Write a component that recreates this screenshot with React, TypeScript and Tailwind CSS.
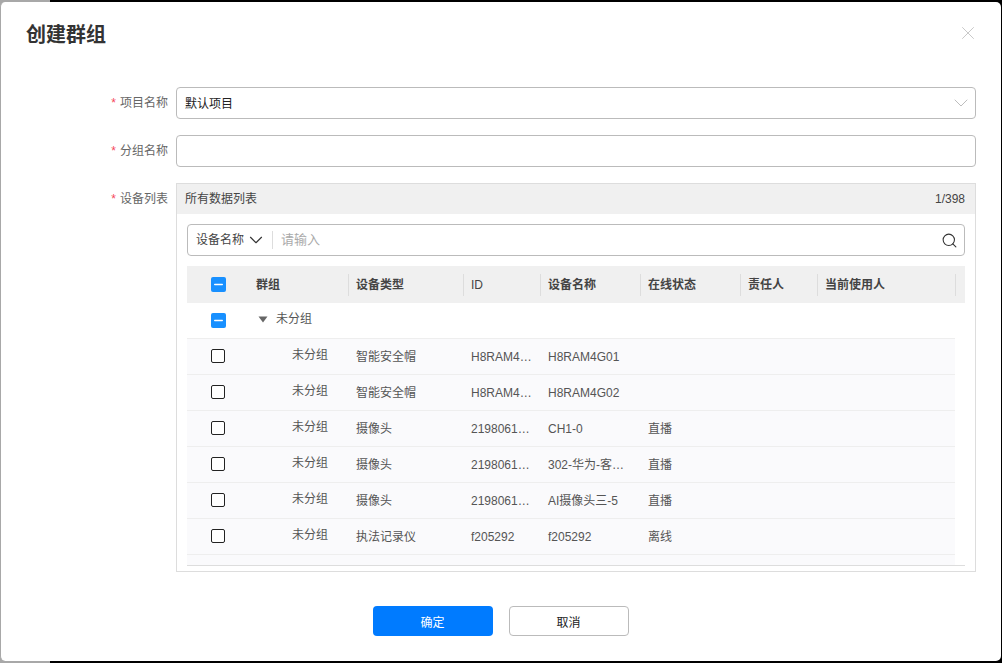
import React from 'react';
import { X, ChevronDown, Search, Minus } from 'lucide-react';

const FONT = 'font-["Liberation_Sans","Noto_Sans_CJK_SC",sans-serif]';
const GRID = 'grid grid-cols-[61px_100px_115px_77px_100px_100px_77px_138px]';

const columns = ['群组', '设备类型', 'ID', '设备名称', '在线状态', '责任人', '当前使用人'];

const devices = [
  { type: '智能安全帽', id: 'H8RAM4…', name: 'H8RAM4G01', status: '' },
  { type: '智能安全帽', id: 'H8RAM4…', name: 'H8RAM4G02', status: '' },
  { type: '摄像头', id: '2198061…', name: 'CH1-0', status: '直播' },
  { type: '摄像头', id: '2198061…', name: '302-华为-客…', status: '直播' },
  { type: '摄像头', id: '2198061…', name: 'AI摄像头三-5', status: '直播' },
  { type: '执法记录仪', id: 'f205292', name: 'f205292', status: '离线' },
];

const Indeterminate = () => (
  <span className="flex h-[15px] w-[15px] items-center justify-center rounded-[2px] bg-[#1890ff] text-white">
    <Minus className="h-[13px] w-[13px]" strokeWidth={2.5} />
  </span>
);

const FieldLabel = ({ children }: { children: string }) => (
  <div className="w-[167px] shrink-0 pt-px text-right text-xs leading-[30px] text-[#666]">
    <span className="mr-1 text-[#f5475b]">*</span>
    {children}
  </div>
);

export default function App() {
  return (
    <div className={`h-[663px] w-[1002px] overflow-hidden bg-[linear-gradient(90deg,#a8a8a8_50px,#000_50px)] py-[2px] pr-px ${FONT}`}>
      <div className="h-[659px] rounded-[5px] border-l border-[#a8a8a8] bg-white">
        <div className="flex items-center justify-between pl-[25px] pr-[22px] pt-[19px]">
          <h1 className="text-xl font-bold leading-[28px] text-[#333]">创建群组</h1>
          <X className="-mt-[4px] h-[22px] w-[22px] text-[#c4c4c4]" strokeWidth={1} />
        </div>

        <div className="mt-[38px] pr-[25px]">
          <div className="flex gap-2">
            <FieldLabel>项目名称</FieldLabel>
            <div className="flex h-8 flex-1 items-center justify-between rounded border border-[#bbb] pl-2 pr-[2px] text-xs leading-[32px] text-[#222]">
              <span className="pt-px">默认项目</span>
              <ChevronDown className="h-[24px] w-[24px] text-[#bdbdbd]" strokeWidth={1} />
            </div>
          </div>

          <div className="mt-4 flex gap-2">
            <FieldLabel>分组名称</FieldLabel>
            <div className="h-8 flex-1 rounded border border-[#bbb]" />
          </div>

          <div className="mt-4 flex gap-2">
            <FieldLabel>设备列表</FieldLabel>
            <div className="h-[389px] flex-1 border border-[#ddd]">
              <div className="flex h-[30px] items-center justify-between bg-[#f0f0f0] pl-2 pr-[10px] text-xs text-[#444]">
                <span>所有数据列表</span>
                <span>1/398</span>
              </div>

              <div className="px-[10px] pt-[10px]">
                <div className="flex h-8 items-center rounded border border-[#bbb] pl-2 pr-[6px] text-xs">
                  <span className="text-[#444]">设备名称</span>
                  <ChevronDown className="ml-px h-[22px] w-[22px] text-[#333]" strokeWidth={1.25} />
                  <span className="ml-[5px] h-[18px] border-l border-[#ddd]" />
                  <span className="ml-2 flex-1 text-[13px] text-[#aaa]">请输入</span>
                  <Search className="h-[17px] w-[17px] text-[#333]" strokeWidth={1.5} />
                </div>

                <div className={`${GRID} mt-[10px] h-[37px] w-[778px] items-center bg-[#f0f0f0] text-xs font-bold text-[#444]`}>
                  <div className="flex justify-center pl-px"><Indeterminate /></div>
                  {columns.map((c) => (
                    <div key={c} className={`-mr-px flex h-[22px] items-center border-r border-[#ddd] pl-2 ${c === 'ID' ? 'font-normal' : ''}`}>
                      {c}
                    </div>
                  ))}
                </div>

                <div className={`${GRID} h-9 w-[768px] items-center border-b border-[#eee] text-xs text-[#555]`}>
                  <div className="flex justify-center pb-px pl-px"><Indeterminate /></div>
                  <div className="col-span-2 flex items-center pb-[3px] pl-[10px]">
                    <svg viewBox="0 0 10 7" className="mr-2 h-[7px] w-[10px] fill-[#666]">
                      <path d="M0.5 0.5h9L5 6.5z" />
                    </svg>
                    未分组
                  </div>
                </div>

                {devices.map((d, i) => (
                  <div key={i} className={`${GRID} h-9 w-[768px] items-center border-b border-[#eee] bg-[#fafafc] text-xs text-[#555]`}>
                    <div className="flex justify-center pb-[2px]">
                      <span className="h-[14px] w-[14px] rounded-[2px] border border-[#222] bg-white" />
                    </div>
                    <div className="pb-[3px] pl-11">未分组</div>
                    <div className="pl-2">{d.type}</div>
                    <div className="pl-2">{d.id}</div>
                    <div className="pl-2">{d.name}</div>
                    <div className="pl-2">{d.status}</div>
                    <div />
                    <div />
                  </div>
                ))}

                <div className="w-[778px] border-b border-[#ddd]">
                  <div className="h-[10px] w-[768px] bg-[#fafafc]" />
                </div>
              </div>
            </div>
          </div>
        </div>

        <div className="mt-[34px] flex justify-center gap-4 pr-[1px] text-xs">
          <button className="h-[30px] w-[120px] rounded bg-[#007bff] pt-[3px] text-white">确定</button>
          <button className="h-[30px] w-[120px] rounded border border-[#bbb] bg-white pt-[3px] text-[#222]">取消</button>
        </div>
      </div>
    </div>
  );
}
